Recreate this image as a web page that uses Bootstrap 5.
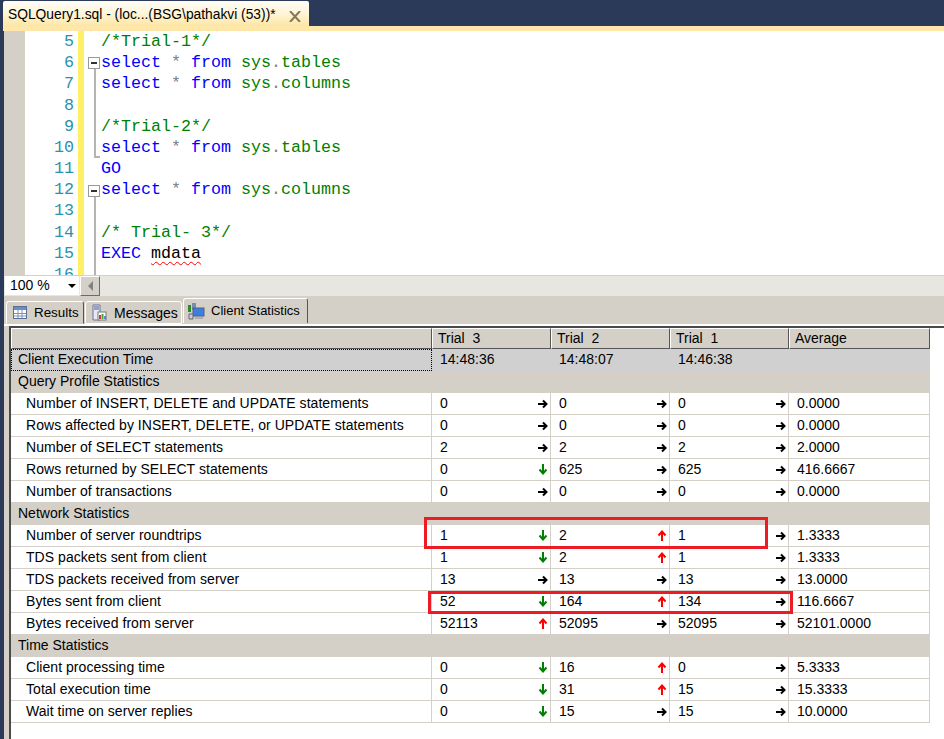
<!DOCTYPE html>
<html lang="en">
<head>
<meta charset="utf-8">
<title>Client Statistics</title>
<link href="https://cdn.jsdelivr.net/npm/bootstrap@5.3.0/dist/css/bootstrap.min.css" rel="stylesheet">
<style>
html,body{height:739px;overflow:hidden}
body{background:#2b3a58;font-family:"Liberation Sans",Arial,sans-serif;font-size:14px;color:#000;position:relative}
.doc-tabbar{height:26px;padding-top:1px;padding-left:3px}
.doc-tab{width:306px;height:25px;background:linear-gradient(#fffdf6,#fff6dc 45%,#fde7a6);border-radius:2px 2px 0 0;font-size:13.8px;line-height:27px;padding-left:5px;white-space:nowrap;position:relative}
.doc-close{position:absolute;left:286px;top:10px}
.doc-strip{height:5px;background:#fee7a8;margin-left:3px}
.editor{height:244px;margin-left:4px;background:#fff;overflow:hidden}
.ed-gutter{width:21px;background:#d4d0c8;flex:none}
.ed-nums{width:53px;flex:none;color:#2b91af;text-align:right;padding-right:4px;font-family:"Liberation Mono",monospace;font-size:16.67px;line-height:21.17px}
.ed-mod{width:6px;flex:none;background:#fff066}
.ed-fold{width:17px;flex:none;position:relative}
.ed-code{font-family:"Liberation Mono",monospace;font-size:16.67px;line-height:21.17px;white-space:pre;color:#000}
.kw{color:#00f}.cm{color:#008000}.sy{color:#008000}.op{color:#808080}
.squig{text-decoration:underline wavy #f00 1.2px;text-underline-offset:3px}
.fold-line{position:absolute;left:10px;width:2px;background:#b4b4b4}
.fl1{top:37px;height:90px}
.fl1::after{content:"";position:absolute;left:0;bottom:0;width:6px;height:2px;background:#b4b4b4}
.fl2{top:165px;height:79px}
.fold-box{position:absolute;left:4px;width:12px;height:12px;border:1px solid #9a9a9a;background:#fff}
.fold-box::after{content:"";position:absolute;left:2px;right:2px;top:4px;height:2px;background:#333}
.fb1{top:26px}.fb2{top:154px}
.zoom-bar{height:21px;margin-left:4px;background:#e8e6e1;border-top:1px solid #d4d0c8}
.zoom-box{width:74px;height:19px;background:#fff;font-size:14px;line-height:19px;padding-left:5px;margin-left:1px;position:relative}
.zoom-box::after{content:"";position:absolute;right:3px;top:8px;border:4px solid transparent;border-top:4px solid #000;border-bottom:0}
.zoom-btn{width:20px;height:20px;background:#d4d0c8;border:1px solid;border-color:#fff #6e6c66 #6e6c66 #fff;margin-left:1px}
.res-wrap{margin-left:4px;height:443px;background:#d4d0c8}
.res-tabs{height:28px;padding-left:2px;padding-top:4px;background:#d4d0c8;align-items:flex-end}
.res-tab{height:23px;background:#d4d0c8;border:1px solid;border-color:#fff #555 transparent #fff;border-radius:3px 3px 0 0;line-height:22px;white-space:nowrap;display:flex;align-items:center;gap:7px;padding-left:6px}
.res-tab.t1{width:78px;font-size:13.4px}
.res-tab.t2{width:97px;margin-left:1px;border-right-color:#fff;border-bottom-color:#fff;font-size:14px}
.res-tab.t3{width:125px;height:25px;margin-left:1px;margin-bottom:1px;border-bottom:0;font-size:13px;padding-left:4px;gap:6px}
.res-panel{background:#d4d0c8;height:415px;padding-left:5px;border-top:2px solid #fff}
.res-inner{background:#fff;height:100%;border-top:2px solid #4a4a4a;border-left:2px solid #4a4a4a}
.grid-tbl{table-layout:fixed;width:919px;border-collapse:separate;border-spacing:0;font-size:14px;color:#000;margin:0}
.col-lbl{width:421px}.col-tr{width:119px}.col-av{width:141px}
.grid-tbl td,.grid-tbl th{height:22px;padding:0 0 0 8px;border:0;border-right:1px solid #d4d0c8;border-bottom:1px solid #d4d0c8;font-weight:400;white-space:nowrap;background:#fff;box-shadow:none;overflow:hidden}
.grid-tbl thead th{background:#d4d0c8;height:21px;line-height:19px;padding:0 0 0 5px;border:1px solid;border-color:#fff #555 #555 #fff}
.grid-tbl tr.hl td{background:#d0d0d0;border-color:#d0d0d0}
.grid-tbl tr.hl td:first-child{outline:1px dotted #000;outline-offset:-1px;padding-left:7px}
.grid-tbl tr.sec td{background:#d4d0c8;border-color:#d4d0c8;padding-left:7px}
.grid-tbl td.lbl{padding-left:15px;letter-spacing:.05px}
.cellflex{display:flex;justify-content:space-between;align-items:center;padding-right:2px}
.cellflex svg{flex:none}
.callout{position:absolute;border:3px solid #ed1c24;pointer-events:none}
.c1{left:424px;top:517px;width:344px;height:32px}
.c2{left:428px;top:591px;width:365px;height:23px}
</style>
</head>
<body>
<svg width="0" height="0" class="d-block position-absolute">
<defs>
<symbol id="ar" viewBox="0 0 10 10"><path d="M0 5H8M5 1.500 8.500 5 5 8.500" fill="none" stroke="#000" stroke-width="2"/></symbol>
<symbol id="up" viewBox="0 0 10 11"><path d="M5 11V2M1.500 5.500 5 1.500 8.500 5.500" fill="none" stroke="#f00" stroke-width="2"/></symbol>
<symbol id="dn" viewBox="0 0 10 11"><path d="M5 0V9M1.500 5.500 5 9.500 8.500 5.500" fill="none" stroke="#008000" stroke-width="2"/></symbol>
</defs>
</svg>
<div class="doc-tabbar"><div class="doc-tab">SQLQuery1.sql - (loc...(BSG\pathakvi (53))*<svg class="doc-close" width="12" height="11" viewBox="0 0 12 11"><path d="M1 0 11 11M11 0 1 11" stroke="#85775a" stroke-width="2" fill="none"/></svg></div></div>
<div class="doc-strip"></div>
<div class="editor d-flex">
<div class="ed-gutter"></div>
<div class="ed-nums">5<br>6<br>7<br>8<br>9<br>10<br>11<br>12<br>13<br>14<br>15<br>16</div>
<div class="ed-mod"></div>
<div class="ed-fold">
<span class="fold-line fl1"></span>
<span class="fold-box fb1"></span>
<span class="fold-line fl2"></span>
<span class="fold-box fb2"></span>
</div>
<div class="ed-code"><span class="cm">/*Trial-1*/</span>
<span class="kw">select</span> <span class="op">*</span> <span class="kw">from</span> <span class="sy">sys</span><span class="op">.</span><span class="sy">tables</span>
<span class="kw">select</span> <span class="op">*</span> <span class="kw">from</span> <span class="sy">sys</span><span class="op">.</span><span class="sy">columns</span>

<span class="cm">/*Trial-2*/</span>
<span class="kw">select</span> <span class="op">*</span> <span class="kw">from</span> <span class="sy">sys</span><span class="op">.</span><span class="sy">tables</span>
<span class="kw">GO</span>
<span class="kw">select</span> <span class="op">*</span> <span class="kw">from</span> <span class="sy">sys</span><span class="op">.</span><span class="sy">columns</span>

<span class="cm">/* Trial- 3*/</span>
<span class="kw">EXEC</span> <span class="squig">mdata</span></div>
</div>
<div class="zoom-bar d-flex">
<div class="zoom-box">100 %</div>
<div class="zoom-btn d-flex align-items-center justify-content-center"><svg width="7" height="10" viewBox="0 0 7 10"><path d="M6 0V10L1 5Z" fill="#808080"/></svg></div>
</div>
<div class="res-wrap">
<div class="res-tabs d-flex">
<div class="res-tab t1"><svg width="14" height="13" viewBox="0 0 14 13"><rect x=".5" y=".5" width="13" height="12" fill="#fff" stroke="#5a6f96"/><path d="M1 1h12v3H1z" fill="#6d8ec4"/><path d="M1 7.500h12M1 10h12M5 4v8M9 4v8" stroke="#7d93b8"/></svg>Results</div>
<div class="res-tab t2"><svg width="15" height="17" viewBox="0 0 15 17"><path d="M1 1h7v15H1z" fill="#e8e8f4" stroke="#6b7590"/><path d="M2 3h5M2 5h5" stroke="#3f5fa8"/><rect x="6" y="8" width="8" height="8" fill="#fff" stroke="#777"/><path d="M8 15v-4" stroke="#d33" stroke-width="2"/><path d="M10.500 15v-5" stroke="#3a3" stroke-width="2"/><path d="M13 15v-3" stroke="#36c" stroke-width="1.500"/></svg>Messages</div>
<div class="res-tab t3"><svg width="17" height="17" viewBox="0 0 17 17"><rect x="0" y="2" width="3" height="7" fill="#2a8a2a"/><rect x="4" y="0" width="4" height="7" fill="#7a8ab0"/><rect x="5" y="5" width="11" height="8" fill="#3d7ee0" stroke="#55607a"/><path d="M7 14h8v2H7z" fill="#a9b0bd"/><path d="M1 11h4v5H1z" fill="#c9cdd6" stroke="#667"/></svg>Client Statistics</div>
</div>
<div class="res-panel">
<div class="res-inner">
<table class="table grid-tbl">
<colgroup><col class="col-lbl"><col class="col-tr"><col class="col-tr"><col class="col-tr"><col class="col-av"></colgroup>
<thead><tr><th></th><th>Trial&nbsp; 3</th><th>Trial&nbsp; 2</th><th>Trial&nbsp; 1</th><th>Average</th></tr></thead>
<tbody>
<tr class="hl"><td>Client Execution Time</td><td>14:48:36</td><td>14:48:07</td><td>14:46:38</td><td></td></tr>
<tr class="sec"><td colspan="5">Query Profile Statistics</td></tr>
<tr><td class="lbl">Number of INSERT, DELETE and UPDATE statements</td><td><div class="cellflex">0<svg width="10" height="10"><use href="#ar"/></svg></div></td><td><div class="cellflex">0<svg width="10" height="10"><use href="#ar"/></svg></div></td><td><div class="cellflex">0<svg width="10" height="10"><use href="#ar"/></svg></div></td><td>0.0000</td></tr>
<tr><td class="lbl">Rows affected by INSERT, DELETE, or UPDATE statements</td><td><div class="cellflex">0<svg width="10" height="10"><use href="#ar"/></svg></div></td><td><div class="cellflex">0<svg width="10" height="10"><use href="#ar"/></svg></div></td><td><div class="cellflex">0<svg width="10" height="10"><use href="#ar"/></svg></div></td><td>0.0000</td></tr>
<tr><td class="lbl">Number of SELECT statements</td><td><div class="cellflex">2<svg width="10" height="10"><use href="#ar"/></svg></div></td><td><div class="cellflex">2<svg width="10" height="10"><use href="#ar"/></svg></div></td><td><div class="cellflex">2<svg width="10" height="10"><use href="#ar"/></svg></div></td><td>2.0000</td></tr>
<tr><td class="lbl">Rows returned by SELECT statements</td><td><div class="cellflex">0<svg width="10" height="11"><use href="#dn"/></svg></div></td><td><div class="cellflex">625<svg width="10" height="10"><use href="#ar"/></svg></div></td><td><div class="cellflex">625<svg width="10" height="10"><use href="#ar"/></svg></div></td><td>416.6667</td></tr>
<tr><td class="lbl">Number of transactions</td><td><div class="cellflex">0<svg width="10" height="10"><use href="#ar"/></svg></div></td><td><div class="cellflex">0<svg width="10" height="10"><use href="#ar"/></svg></div></td><td><div class="cellflex">0<svg width="10" height="10"><use href="#ar"/></svg></div></td><td>0.0000</td></tr>
<tr class="sec"><td colspan="5">Network Statistics</td></tr>
<tr><td class="lbl">Number of server roundtrips</td><td><div class="cellflex">1<svg width="10" height="11"><use href="#dn"/></svg></div></td><td><div class="cellflex">2<svg width="10" height="11"><use href="#up"/></svg></div></td><td><div class="cellflex">1<svg width="10" height="10"><use href="#ar"/></svg></div></td><td>1.3333</td></tr>
<tr><td class="lbl">TDS packets sent from client</td><td><div class="cellflex">1<svg width="10" height="11"><use href="#dn"/></svg></div></td><td><div class="cellflex">2<svg width="10" height="11"><use href="#up"/></svg></div></td><td><div class="cellflex">1<svg width="10" height="10"><use href="#ar"/></svg></div></td><td>1.3333</td></tr>
<tr><td class="lbl">TDS packets received from server</td><td><div class="cellflex">13<svg width="10" height="10"><use href="#ar"/></svg></div></td><td><div class="cellflex">13<svg width="10" height="10"><use href="#ar"/></svg></div></td><td><div class="cellflex">13<svg width="10" height="10"><use href="#ar"/></svg></div></td><td>13.0000</td></tr>
<tr><td class="lbl">Bytes sent from client</td><td><div class="cellflex">52<svg width="10" height="11"><use href="#dn"/></svg></div></td><td><div class="cellflex">164<svg width="10" height="11"><use href="#up"/></svg></div></td><td><div class="cellflex">134<svg width="10" height="10"><use href="#ar"/></svg></div></td><td>116.6667</td></tr>
<tr><td class="lbl">Bytes received from server</td><td><div class="cellflex">52113<svg width="10" height="11"><use href="#up"/></svg></div></td><td><div class="cellflex">52095<svg width="10" height="10"><use href="#ar"/></svg></div></td><td><div class="cellflex">52095<svg width="10" height="10"><use href="#ar"/></svg></div></td><td>52101.0000</td></tr>
<tr class="sec"><td colspan="5">Time Statistics</td></tr>
<tr><td class="lbl">Client processing time</td><td><div class="cellflex">0<svg width="10" height="11"><use href="#dn"/></svg></div></td><td><div class="cellflex">16<svg width="10" height="11"><use href="#up"/></svg></div></td><td><div class="cellflex">0<svg width="10" height="10"><use href="#ar"/></svg></div></td><td>5.3333</td></tr>
<tr><td class="lbl">Total execution time</td><td><div class="cellflex">0<svg width="10" height="11"><use href="#dn"/></svg></div></td><td><div class="cellflex">31<svg width="10" height="11"><use href="#up"/></svg></div></td><td><div class="cellflex">15<svg width="10" height="10"><use href="#ar"/></svg></div></td><td>15.3333</td></tr>
<tr><td class="lbl">Wait time on server replies</td><td><div class="cellflex">0<svg width="10" height="11"><use href="#dn"/></svg></div></td><td><div class="cellflex">15<svg width="10" height="10"><use href="#ar"/></svg></div></td><td><div class="cellflex">15<svg width="10" height="10"><use href="#ar"/></svg></div></td><td>10.0000</td></tr>
</tbody>
</table>
</div>
</div>
</div>
<div class="callout c1"></div><div class="callout c2"></div>
</body>
</html>
